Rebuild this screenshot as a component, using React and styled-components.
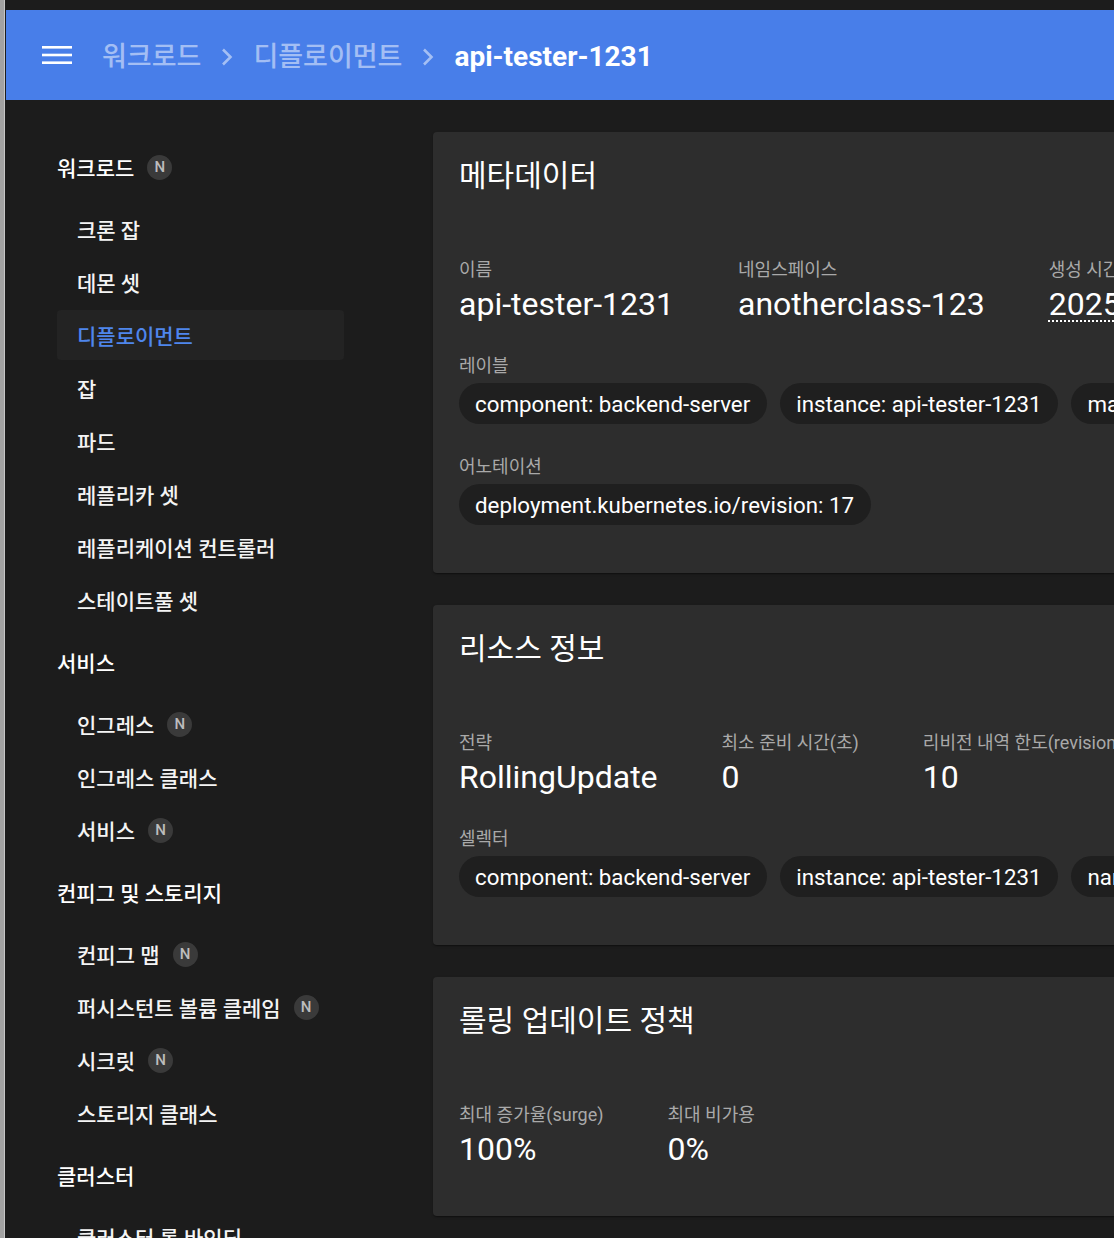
import styled, { createGlobalStyle } from "styled-components";

const GlobalStyle = createGlobalStyle`
  html, body {
    margin: 0;
    background: #1c1c1c;
    overflow: hidden;
  }
  body {
    font-family: Roboto, "Noto Sans CJK KR", sans-serif;
    color: #fff;
  }
  * { box-sizing: border-box; }
`

const Page = styled.div`
  min-height: 100vh;
  padding-top: 10px;
  border-left: 4px solid #a2a2a2;
  box-shadow: inset 1px 0 #c6c6c6;
  padding-left: 2px;
  display: flex;
  flex-direction: column;
`

const Header = styled.header`
  height: 90px;
  background: #487ee9;
  display: flex;
  align-items: center;
  padding-left: 36px;
  gap: 30px;
`

const Burger = styled.svg`
  width: 30px;
  height: 20px;
  flex-shrink: 0;
`

const Crumbs = styled.nav`
  display: flex;
  align-items: center;
  gap: 20px;
  margin-top: 3px;
`

const Crumb = styled.span`
  font-size: ${p => (p.$current ? "28px" : "27px")};
  font-weight: ${p => (p.$current ? 700 : 500)};
  color: ${p => (p.$current ? "#fff" : "rgba(255,255,255,0.5)")};
  line-height: 34px;
  white-space: nowrap;
`

const Chevron = styled.svg`
  width: 12px;
  height: 18px;
  flex-shrink: 0;
`

const Body = styled.div`
  display: flex;
  flex: 1;
`

const Sidebar = styled.aside`
  width: 395px;
  flex-shrink: 0;
  padding: 42px 0 0 51px;
  display: flex;
  flex-direction: column;
  gap: 12px;
`

const Group = styled.div`
  display: flex;
  flex-direction: column;
`

const GroupTitle = styled.div`
  height: 50px;
  display: flex;
  align-items: center;
  gap: 13px;
  font-size: 21px;
  font-weight: 500;
  margin-bottom: 12px;
  white-space: nowrap;
`

const NavList = styled.div`
  display: flex;
  flex-direction: column;
  gap: 3px;
`

const NavItem = styled.div`
  width: 287px;
  height: 50px;
  padding-left: 20px;
  display: flex;
  align-items: center;
  gap: 13px;
  border-radius: 4px;
  font-size: 21px;
  font-weight: 500;
  background: ${p => (p.$active ? "#232323" : "transparent")};
  color: ${p => (p.$active ? "#4f86ec" : "#f4f4f4")};
  white-space: nowrap;
`

const Badge = styled.span`
  width: 25px;
  height: 25px;
  border-radius: 50%;
  background: #3a3a3a;
  color: #bdbdbd;
  font-family: Roboto, sans-serif;
  font-size: 15px;
  font-weight: 500;
  display: inline-flex;
  align-items: center;
  justify-content: center;
  flex-shrink: 0;
`

const Main = styled.main`
  width: 1400px;
  flex-shrink: 0;
  padding: 32px;
  display: flex;
  flex-direction: column;
  gap: 32px;
`

const Card = styled.section`
  background: #2d2d2d;
  border-radius: 4px;
  padding: 26px 26px 48px;
  box-shadow: 0 2px 1px -1px rgba(0,0,0,0.2), 0 1px 1px rgba(0,0,0,0.14), 0 1px 3px rgba(0,0,0,0.12);
`

const CardTitle = styled.h2`
  margin: 0 0 64px;
  font-size: 30px;
  line-height: 36px;
  font-weight: 400;
`

const Sections = styled.div`
  display: flex;
  flex-direction: column;
  gap: 31px;
`

const FieldRow = styled.div`
  display: flex;
  gap: 64px;
`

const Field = styled.div`
  display: flex;
  flex-direction: column;
  white-space: nowrap;
`

const Label = styled.div`
  font-size: 18px;
  line-height: 24px;
  color: #a9a9a9;
`

const Value = styled.div`
  margin-top: 4px;
  font-size: 32px;
  line-height: 37px;
  text-decoration: ${p => (p.$dotted ? "underline dotted 2px" : "none")};
  text-underline-offset: 5px;
`

const ChipRow = styled.div`
  margin-top: 5px;
  display: flex;
  gap: 13px;
`

const Chip = styled.span`
  height: 41px;
  padding: 0 17px 0 16px;
  border-radius: 21px;
  background: #1f1f1f;
  font-size: 22.3px;
  display: inline-flex;
  align-items: center;
  white-space: nowrap;
  flex-shrink: 0;
`

const nav = [
  {
    title: "워크로드", badge: true,
    items: [
      { name: "크론 잡" }, { name: "데몬 셋" }, { name: "디플로이먼트", active: true },
      { name: "잡" }, { name: "파드" }, { name: "레플리카 셋" },
      { name: "레플리케이션 컨트롤러" }, { name: "스테이트풀 셋" },
    ],
  },
  {
    title: "서비스",
    items: [{ name: "인그레스", badge: true }, { name: "인그레스 클래스" }, { name: "서비스", badge: true }],
  },
  {
    title: "컨피그 및 스토리지",
    items: [
      { name: "컨피그 맵", badge: true }, { name: "퍼시스턴트 볼륨 클레임", badge: true },
      { name: "시크릿", badge: true }, { name: "스토리지 클래스" },
    ],
  },
  {
    title: "클러스터",
    items: [{ name: "클러스터 롤 바인딩" }, { name: "클러스터 롤" }],
  },
]

const labels = ["component: backend-server", "instance: api-tester-1231", "managed-by: Helm", "name: api-tester"]
const selector = ["component: backend-server", "instance: api-tester-1231", "name: api-tester"]

function ChevronIcon() {
  return (
    <Chevron viewBox="0 0 12 18">
      <path d="M2 1.5 L9.5 9 L2 16.5" fill="none" stroke="rgba(255,255,255,0.5)" strokeWidth="2.6" />
    </Chevron>
  )
}

export default function App() {
  return (
    <>
      <GlobalStyle />
      <Page>
        <Header>
          <Burger viewBox="0 0 30 20">
            <rect x="0" y="1" width="30" height="2.6" fill="#fff" />
            <rect x="0" y="8.7" width="30" height="2.6" fill="#fff" />
            <rect x="0" y="16.4" width="30" height="2.6" fill="#fff" />
          </Burger>
          <Crumbs>
            <Crumb>워크로드</Crumb>
            <ChevronIcon />
            <Crumb>디플로이먼트</Crumb>
            <ChevronIcon />
            <Crumb $current>api-tester-1231</Crumb>
          </Crumbs>
        </Header>
        <Body>
          <Sidebar>
            {nav.map(g => (
              <Group key={g.title}>
                <GroupTitle>
                  {g.title}
                  {g.badge && <Badge>N</Badge>}
                </GroupTitle>
                <NavList>
                  {g.items.map(it => (
                    <NavItem key={it.name} $active={it.active}>
                      {it.name}
                      {it.badge && <Badge>N</Badge>}
                    </NavItem>
                  ))}
                </NavList>
              </Group>
            ))}
          </Sidebar>
          <Main>
            <Card>
              <CardTitle>메타데이터</CardTitle>
              <Sections>
                <FieldRow>
                  <Field><Label>이름</Label><Value>api-tester-1231</Value></Field>
                  <Field><Label>네임스페이스</Label><Value>anotherclass-123</Value></Field>
                  <Field><Label>생성 시간</Label><Value $dotted>2025. 1. 8. 오후 3:21:07</Value></Field>
                </FieldRow>
                <Field>
                  <Label>레이블</Label>
                  <ChipRow>{labels.map(l => <Chip key={l}>{l}</Chip>)}</ChipRow>
                </Field>
                <Field>
                  <Label>어노테이션</Label>
                  <ChipRow><Chip>deployment.kubernetes.io/revision: 17</Chip></ChipRow>
                </Field>
              </Sections>
            </Card>
            <Card>
              <CardTitle>리소스 정보</CardTitle>
              <Sections>
                <FieldRow>
                  <Field><Label>전략</Label><Value>RollingUpdate</Value></Field>
                  <Field><Label>최소 준비 시간(초)</Label><Value>0</Value></Field>
                  <Field><Label>리비전 내역 한도(revisionHistoryLimit)</Label><Value>10</Value></Field>
                </FieldRow>
                <Field>
                  <Label>셀렉터</Label>
                  <ChipRow>{selector.map(l => <Chip key={l}>{l}</Chip>)}</ChipRow>
                </Field>
              </Sections>
            </Card>
            <Card>
              <CardTitle>롤링 업데이트 정책</CardTitle>
              <Sections>
                <FieldRow>
                  <Field><Label>최대 증가율(surge)</Label><Value>100%</Value></Field>
                  <Field><Label>최대 비가용</Label><Value>0%</Value></Field>
                </FieldRow>
              </Sections>
            </Card>
          </Main>
        </Body>
      </Page>
    </>
  )
}
